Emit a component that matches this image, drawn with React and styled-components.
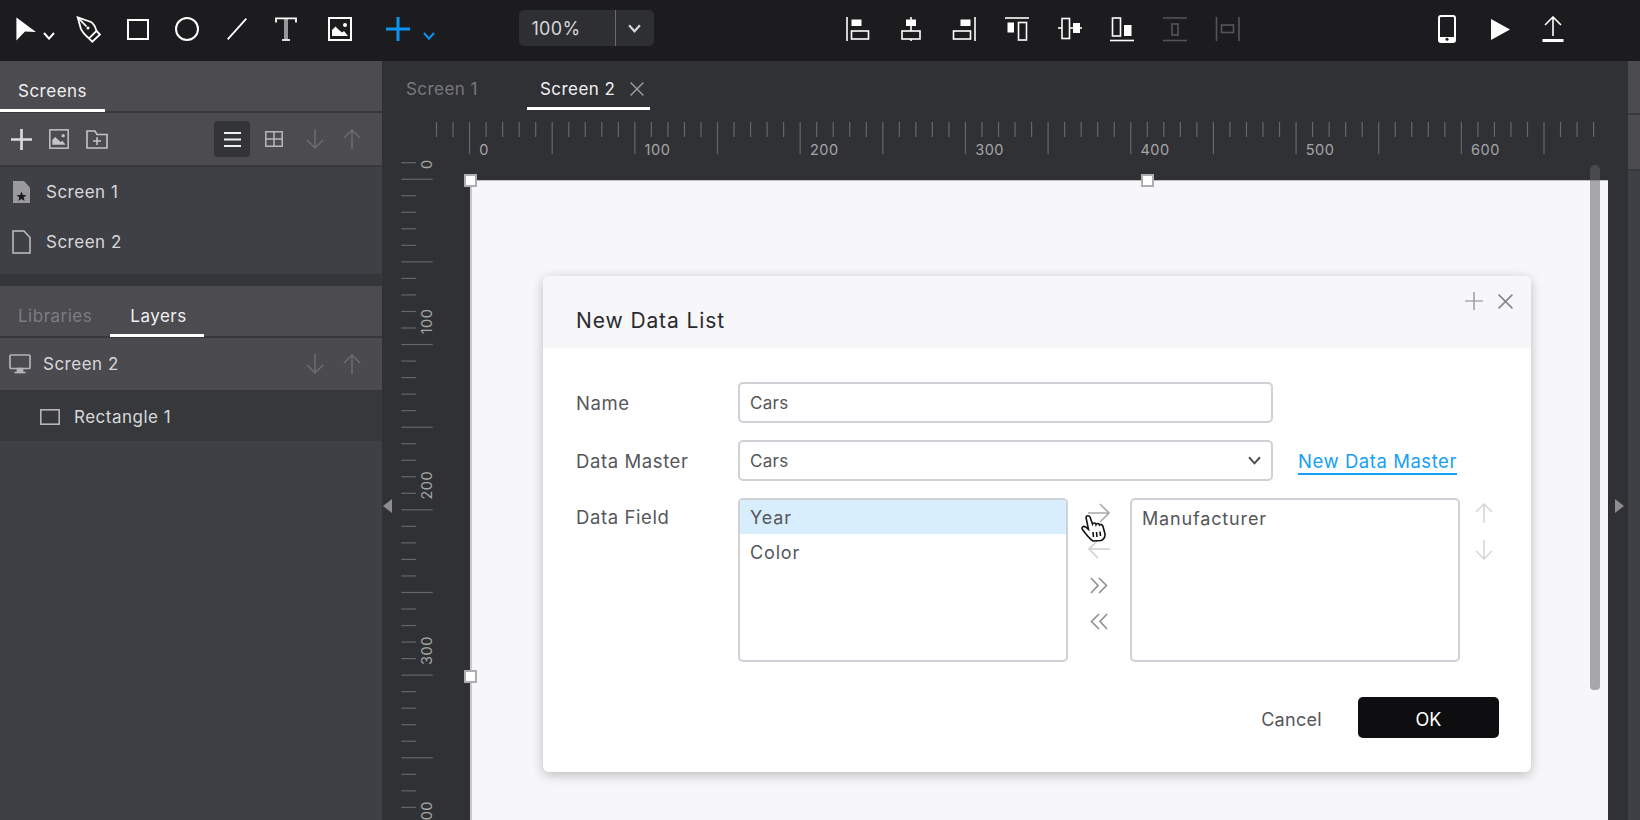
import React from 'react'
import styled, { createGlobalStyle } from 'styled-components'

const GlobalStyle = createGlobalStyle`
  html, body, #root {
    margin: 0;
    width: 1640px;
    height: 820px;
    overflow: hidden;
  }
  body {
    font-family: Inter, "Open Sans", "Liberation Sans", sans-serif;
    background: #303135;
  }
`

const Page = styled.div`
  display: flex;
  flex-direction: column;
  width: 1640px;
  height: 820px;
`

/* top toolbar */
const TopBar = styled.header`
  display: flex;
  align-items: center;
  flex: none;
  height: 61px;
  padding: 0 0 3px 16px;
  box-sizing: border-box;
  background: #1c1c1f;
`
const DrawTools = styled.div`
  display: flex;
  align-items: center;
  width: 502.5px;
  height: 100%;
`
const ToolSlot = styled.div`
  display: flex;
  align-items: center;
  justify-content: ${({ $start }) => ($start ? 'flex-start' : 'center')};
  flex: none;
  width: ${({ $w }) => $w || 49.5}px;
  margin-left: ${({ $ml }) => $ml || 0}px;
  height: 100%;
  padding-top: ${({ $pt }) => $pt || 0}px;
  box-sizing: border-box;
  gap: ${({ $gap }) => $gap || 0}px;
`
const CursorCaret = styled.span`
  display: flex;
  margin-top: 13px;
`
const ZoomBox = styled.div`
  display: flex;
  align-items: center;
  flex: none;
  width: 135px;
  height: 36px;
  margin-top: -2px;
  border-radius: 5px;
  background: #2e2f33;
  color: #d6d6d8;
  font-size: 18px;
`
const ZoomValue = styled.div`
  flex: none;
  width: 96.5px;
  padding-left: 13px;
  box-sizing: border-box;
  letter-spacing: 0.3px;
`
const ZoomCaret = styled.div`
  display: flex;
  align-items: center;
  justify-content: center;
  flex: 1;
  height: 100%;
  border-left: 1px solid #6b6b6f;
`
const AlignTools = styled.div`
  display: flex;
  align-items: center;
  height: 100%;
  margin-left: 178.5px;
`
const DeviceTools = styled.div`
  display: flex;
  align-items: center;
  height: 100%;
  margin-left: 166.5px;
`

/* left panels */
const Body = styled.div`
  display: flex;
  flex: 1;
  min-height: 0;
`
const Sidebar = styled.aside`
  display: flex;
  flex-direction: column;
  flex: none;
  width: 382px;
  background: #3f4045;
  color: #d8d8da;
  font-size: 17px;
  letter-spacing: 0.5px;
`
const PanelTabs = styled.div`
  display: flex;
  align-items: flex-start;
  flex: none;
  height: 52px;
  box-sizing: border-box;
  border-bottom: 2px solid #37383c;
  background: #4b4b50;
`
const PanelTab = styled.div`
  display: flex;
  align-items: center;
  justify-content: ${({ $center }) => ($center ? 'center' : 'flex-start')};
  flex: none;
  width: ${({ $w }) => $w}px;
  height: 51px;
  padding-left: ${({ $pl }) => $pl || 0}px;
  padding-top: 11px;
  box-sizing: border-box;
  border-bottom: 3px solid ${({ $active }) => ($active ? '#fff' : 'transparent')};
  color: ${({ $active }) => ($active ? '#f0f0f2' : '#7d7d82')};
`
const PanelToolbar = styled.div`
  display: flex;
  align-items: center;
  flex: none;
  height: 54px;
  padding: 0 21px 0 11px;
  box-sizing: border-box;
  border-bottom: 2px solid #37383c;
  background: #4b4b50;
`
const ToolIcon = styled.div`
  display: flex;
  flex: none;
  margin-left: ${({ $ml }) => $ml || 0}px;
`
const ViewButton = styled.div`
  display: flex;
  align-items: center;
  justify-content: center;
  flex: none;
  width: 36px;
  height: 36px;
  margin-left: ${({ $ml }) => $ml || 0}px;
  border-radius: 4px;
  background: ${({ $active }) => ($active ? '#333438' : 'transparent')};
`
const ArrowPair = styled.div`
  display: flex;
  align-items: center;
  gap: 19px;
  margin-left: auto;
  color: #6c6d72;
`
const ScreenList = styled.div`
  flex: none;
  height: 107px;
  box-sizing: border-box;
  padding-top: 0.5px;
  background: #3f4045;
`
const ScreenRow = styled.div`
  display: flex;
  align-items: center;
  height: 49.5px;
  padding-left: 12px;
  gap: 15px;
`
const PanelGap = styled.div`
  flex: none;
  height: 12px;
  background: #35363a;
`
const LayerHead = styled.div`
  display: flex;
  align-items: center;
  flex: none;
  height: 53px;
  padding: 0 21px 0 9px;
  box-sizing: border-box;
  gap: 12px;
  border-bottom: 1px solid #37383c;
  background: #4a4a4f;
`
const LayerRow = styled.div`
  display: flex;
  align-items: center;
  flex: none;
  height: 50px;
  padding: 2px 0 0 40px;
  box-sizing: border-box;
  gap: 14px;
  background: #37383c;
`

/* workspace */
const Workspace = styled.main`
  position: relative;
  display: flex;
  flex-direction: column;
  flex: 1;
  min-width: 0;
  background: #303135;
`
const DocTabs = styled.div`
  display: flex;
  align-items: flex-start;
  flex: none;
  height: 50px;
  padding-left: 24px;
  font-size: 17px;
  letter-spacing: 0.45px;
`
const DocTab = styled.div`
  display: flex;
  align-items: center;
  gap: 15px;
  height: 49px;
  box-sizing: border-box;
  padding: 10px ${({ $active }) => ($active ? 5 : 0)}px 0 ${({ $active }) => ($active ? 13 : 0)}px;
  margin-left: ${({ $ml }) => $ml || 0}px;
  width: ${({ $w }) => $w}px;
  border-bottom: 3px solid ${({ $active }) => ($active ? '#fff' : 'transparent')};
  color: ${({ $active }) => ($active ? '#f0f0f2' : '#77787c')};
`
const Stage = styled.div`
  display: flex;
  flex: 1;
  min-height: 0;
`
const RulerColumn = styled.div`
  flex: none;
  width: 52px;
`
const StageBody = styled.div`
  position: relative;
  display: flex;
  flex-direction: column;
  flex: 1;
  min-width: 0;
`
const RulerSvg = styled.svg`
  display: block;
  flex: none;
  font-family: Inter, "Open Sans", sans-serif;
  font-size: 14.5px;
  letter-spacing: 0.5px;
  fill: #a5a5a8;
`
const Artboard = styled.div`
  position: relative;
  flex: 1;
  margin: 0 20px 0 36px;
  padding: 95px 0 0 71px;
  border-top: 1px solid #bdbdc2;
  border-left: 2px solid #c8c8cd;
  background: #f7f6f9;
`
const Handle = styled.span`
  position: absolute;
  left: ${({ $x }) => $x}px;
  top: ${({ $y }) => $y}px;
  width: 13px;
  height: 13px;
  box-sizing: border-box;
  border: 2px solid #aeaeb2;
  background: #fff;
`
const Scrollbar = styled.div`
  position: absolute;
  left: 1156px;
  top: 54px;
  width: 10px;
  height: 525px;
  border-radius: 5px 5px 4px 4px;
  background: rgba(97, 97, 100, 0.53);
`
const CollapseArrow = styled.svg`
  position: absolute;
  top: 438px;
  left: ${({ $x }) => $x}px;
  fill: #8d8d91;
`
const CollapsedPanel = styled.div`
  display: flex;
  flex-direction: column;
  flex: none;
  width: 12px;
  background: #3f4045;
`
const StripCell = styled.div`
  flex: none;
  height: ${({ $h }) => $h}px;
  border-bottom: 2px solid #37383c;
  background: #4b4b50;
`

/* dialog */
const Dialog = styled.div`
  width: 988px;
  height: 496px;
  display: flex;
  flex-direction: column;
  border-radius: 6px;
  background: #fff;
  box-shadow: 0 3px 12px rgba(0, 0, 0, 0.24);
  color: #55565b;
  font-size: 18.5px;
  letter-spacing: 0.6px;
`
const DialogHead = styled.div`
  position: relative;
  display: flex;
  align-items: center;
  flex: none;
  height: 72px;
  padding: 16px 0 0 33px;
  box-sizing: border-box;
  border-radius: 6px 6px 0 0;
  background: #f7f6f9;
`
const DialogTitle = styled.h2`
  margin: 0;
  color: #2a2a2e;
  font-size: 21px;
  font-weight: 400;
  letter-spacing: 0.9px;
`
const HeadActions = styled.div`
  position: absolute;
  top: 16px;
  right: 18px;
  display: flex;
  align-items: center;
  gap: 15px;
  color: #86878c;
`
const DialogBody = styled.div`
  display: flex;
  flex-direction: column;
  flex: 1;
  padding: 34px 32px 34px 33px;
`
const FormRow = styled.div`
  display: flex;
  align-items: center;
  height: 41px;
  margin-bottom: 17px;
`
const FieldLabel = styled.label`
  flex: none;
  width: 162px;
  padding-top: ${({ $pt }) => $pt || 1}px;
  box-sizing: border-box;
`
const Input = styled.div`
  display: flex;
  align-items: center;
  justify-content: space-between;
  flex: none;
  width: 535px;
  height: 41px;
  padding: 0 10px;
  box-sizing: border-box;
  border: 2px solid #d0d0d7;
  border-radius: 5px;
  background: #fff;
  font-size: 17px;
  letter-spacing: 0.3px;
`
const DataLink = styled.a`
  margin: 4px 0 0 25px;
  padding-bottom: 1px;
  border-bottom: 2px solid #14a0f5;
  color: #14a0f5;
  font-size: 18.5px;
  letter-spacing: 0.55px;
`
const FieldRow = styled.div`
  display: flex;
  align-items: flex-start;
  height: 164px;
`
const ListBox = styled.div`
  flex: none;
  width: 330px;
  height: 164px;
  box-sizing: border-box;
  border: 2px solid #d0d0d7;
  border-radius: 5px;
  overflow: hidden;
  background: #fff;
  font-size: 18px;
  letter-spacing: 0.85px;
`
const ListItem = styled.div`
  display: flex;
  align-items: center;
  height: ${({ $selected }) => ($selected ? 34 : 36)}px;
  padding-left: 10px;
  background: ${({ $selected }) => ($selected ? '#d9eefc' : 'transparent')};
`
const MoveColumn = styled.div`
  position: relative;
  display: flex;
  flex-direction: column;
  align-items: center;
  flex: none;
  width: 62px;
  padding-top: 5px;
  box-sizing: border-box;
  gap: 16px;
`
const MoveIcon = styled.div`
  display: flex;
  height: 20px;
  align-items: center;
  color: ${({ $color }) => $color};
`
const HandCursor = styled.svg`
  position: absolute;
  left: 13px;
  top: 16px;
`
const OrderColumn = styled.div`
  display: flex;
  flex-direction: column;
  align-items: center;
  flex: none;
  width: 47px;
  padding-top: 5px;
  gap: 17px;
  color: #d5d5da;
`
const DialogFooter = styled.div`
  display: flex;
  align-items: center;
  justify-content: flex-end;
  margin-top: 35px;
  gap: 36px;
`
const TextButton = styled.button`
  padding: 3px 0 0;
  border: 0;
  background: none;
  color: #55565b;
  font: inherit;
  font-size: 18px;
  letter-spacing: 0.3px;
`
const PrimaryButton = styled.button`
  width: 141px;
  height: 41px;
  padding: 3px 0 0;
  border: 0;
  border-radius: 5px;
  background: #0e0e10;
  color: #fff;
  font: inherit;
  font-size: 18px;
`

/* drawn icons */
const Turned = styled.svg`
  flex: none;
  transform: rotate(${({ $turn }) => $turn || 0}deg) scaleX(${({ $flip }) => ($flip ? -1 : 1)});
`

const Chevron = ({ w = 12, h = 8, color = '#fff', sw = 2 }) => (
  <svg width={w} height={h} viewBox="0 0 12 8" fill="none" stroke={color} strokeWidth={sw}>
    <path d="M1 1 L6 6.6 L11 1" />
  </svg>
)

const Arrow = ({ rotate = 0 }) => (
  <Turned $turn={rotate} width="18" height="20" viewBox="0 0 18 20" fill="none" stroke="currentColor" strokeWidth="1.5">
    <path d="M9 1 V20 M1 9 L9 1 L17 9" />
  </Turned>
)

const SideArrow = ({ rotate = 0 }) => (
  <Turned $turn={rotate} width="22" height="20" viewBox="0 0 22 20" fill="none" stroke="currentColor" strokeWidth="1.6">
    <path d="M0 10 H21 M12 1 L21 10 L12 19" />
  </Turned>
)

const DoubleChevron = ({ flip }) => (
  <Turned $flip={flip} width="18" height="17" viewBox="0 0 18 17" fill="none" stroke="currentColor" strokeWidth="1.6">
    <path d="M1 1 L8 8.5 L1 16 M9 1 L16.5 8.5 L9 16" />
  </Turned>
)

const CursorIcon = () => (
  <svg width="21" height="24" viewBox="0 0 21 24" fill="#fff"><path d="M0.4 0.4 L20 15 L9 14.6 L0.4 23.4 Z" /></svg>
)
const PenIcon = () => (
  <svg width="25" height="27" viewBox="0 0 25 27" fill="none" stroke="#fff" strokeWidth="1.8">
    <path d="M1.7 1.3 L15 6 Q18.5 8 20.5 15 L13 22.3 Q7 17.5 4.7 12.3 Z" />
    <path d="M20.5 15 L24 18.5 L16.3 25.7 L13 22.3" />
    <path d="M1.7 1.3 L10.5 10.5" />
    <circle cx="12" cy="12" r="1.5" fill="#fff" stroke="none" />
  </svg>
)
const RectIcon = () => (
  <svg width="22" height="21" viewBox="0 0 22 21" fill="none" stroke="#fff" strokeWidth="2"><rect x="1" y="1" width="20" height="19" /></svg>
)
const CircleIcon = () => (
  <svg width="24" height="24" viewBox="0 0 24 24" fill="none" stroke="#fff" strokeWidth="2"><circle cx="12" cy="12" r="11" /></svg>
)
const LineIcon = () => (
  <svg width="20" height="22" viewBox="0 0 20 22" fill="none" stroke="#fff" strokeWidth="1.8"><path d="M0.7 21.4 L19.3 0.6" /></svg>
)
const TextIcon = () => (
  <svg width="22" height="24" viewBox="0 0 22 24" fill="none" stroke="#fff">
    <path d="M1 5.5 V1.4 H21 V5.5" strokeWidth="1.8" />
    <path d="M10 2 V22.6 M12 2 V22.6" strokeWidth="1.1" />
    <path d="M7 23 H15" strokeWidth="1.7" />
  </svg>
)
const ImageIcon = ({ size = 24, color = '#fff', sw = 2 }) => (
  <svg width={size} height={size} viewBox="0 0 24 24" fill="none" stroke={color} strokeWidth={sw}>
    <rect x="1" y="1" width="22" height="22" />
    <path d="M4 19 V13 L7.5 9.5 L11 13 L14 15.5 L16 14 L20 19 Z" fill={color} stroke="none" />
    <circle cx="17" cy="8" r="2" fill={color} stroke="none" />
  </svg>
)
const BigPlus = ({ size = 24, color = '#fff', sw = 3 }) => (
  <svg width={size} height={size} viewBox="0 0 24 24" fill="none" stroke={color} strokeWidth={sw}><path d="M12 0 V24 M0 12 H24" /></svg>
)
const FolderPlus = () => (
  <svg width="22" height="19" viewBox="0 0 22 19" fill="none" stroke="#c4c4c8" strokeWidth="1.6">
    <path d="M1 18 V1 H9 L11 4.5 H21 V18 Z" />
    <path d="M7 11 H15 M11 7.2 V15" />
  </svg>
)
const ListIcon = () => (
  <svg width="17" height="15" viewBox="0 0 17 15" fill="none" stroke="#f0f0f2" strokeWidth="1.8"><path d="M0 1 H17 M0 7.5 H17 M0 14 H17" /></svg>
)
const GridIcon = () => (
  <svg width="18" height="16" viewBox="0 0 18 16" fill="none" stroke="#b8b8bc" strokeWidth="1.5"><path d="M0.8 0.8 H17.2 V15.2 H0.8 Z M9 0.8 V15.2 M0.8 8 H17.2" /></svg>
)
const PageIcon = ({ starred }) => (
  <svg width="19" height="24" viewBox="0 0 19 24" fill={starred ? '#9a9a9e' : 'none'} stroke={starred ? 'none' : '#c0c0c4'} strokeWidth="1.5">
    <path d="M1 1 H12 L18 7.5 V23 H1 Z" />
    {starred && <path d="M9.5 11.5 L10.9 15 L14.5 15.2 L11.7 17.5 L12.6 21 L9.5 19 L6.4 21 L7.3 17.5 L4.5 15.2 L8.1 15 Z" fill="#1c1c1f" />}
  </svg>
)
const MonitorIcon = () => (
  <svg width="22" height="20" viewBox="0 0 22 20" fill="none" stroke="#b4b4b8" strokeWidth="1.7">
    <rect x="1" y="1" width="20" height="13.5" rx="1" />
    <path d="M8.5 14.5 H13.5 V17.5 H8.5 Z" fill="#b4b4b8" />
    <path d="M5.5 18.5 H16.5" />
  </svg>
)
const RectOutline = () => (
  <svg width="20" height="16" viewBox="0 0 20 16" fill="none" stroke="#b4b4b8" strokeWidth="1.6"><rect x="0.8" y="0.8" width="18.4" height="14.4" /></svg>
)

const AlignSvg = styled.svg`
  color: ${({ $dim }) => ($dim ? '#55565a' : '#fff')};
  stroke: currentColor;
  fill: none;
  stroke-width: 1.6;
`
const AlignIcon = ({ dim, children }) => (
  <AlignSvg $dim={dim} width="26" height="26" viewBox="0 0 26 26">{children}</AlignSvg>
)
const ALIGN = [
  <><path d="M2 1 V25" /><rect x="6.5" y="3.5" width="10" height="6.5" fill="currentColor" stroke="none" /><rect x="6.5" y="15" width="17" height="8" /></>,
  <><path d="M13 1 V25" /><rect x="8" y="3.5" width="10" height="6.5" fill="currentColor" stroke="none" /><rect x="4" y="15" width="18" height="8" fill="#1c1c1f" /></>,
  <><path d="M24 1 V25" /><rect x="9.5" y="3.5" width="10" height="6.5" fill="currentColor" stroke="none" /><rect x="2.5" y="15" width="17" height="8" /></>,
  <><path d="M1 2 H25" /><rect x="3.5" y="6.5" width="6.5" height="10" fill="currentColor" stroke="none" /><rect x="14.5" y="6.5" width="8" height="17.5" /></>,
  <><path d="M1 12 H25" /><rect x="5" y="2.5" width="7.5" height="20" fill="#1c1c1f" /><rect x="16" y="7" width="7" height="10" fill="currentColor" stroke="none" /></>,
  <><rect x="3.5" y="2" width="8" height="18" /><rect x="15" y="9" width="7.5" height="11" fill="currentColor" stroke="none" /><path d="M1 24.5 H25" /></>,
]
const DistV = () => (
  <AlignIcon dim><path d="M1 2 H25 M1 24.5 H25" /><rect x="10" y="8" width="6" height="11" /></AlignIcon>
)
const DistH = () => (
  <AlignIcon dim><path d="M1.5 1 V25 M24 1 V25" /><rect x="6.5" y="9" width="12" height="7.5" /></AlignIcon>
)
const PhoneIcon = () => (
  <svg width="18" height="28" viewBox="0 0 18 28" fill="none" stroke="#fff" strokeWidth="2">
    <rect x="1" y="1" width="16" height="26" rx="2" />
    <path d="M1 22 H17 V25 Q17 27 15 27 H3 Q1 27 1 25 Z" fill="#fff" stroke="none" />
    <circle cx="9" cy="24.3" r="1.5" fill="#1c1c1f" stroke="none" />
  </svg>
)
const PlayIcon = () => (
  <svg width="19" height="21" viewBox="0 0 19 21" fill="#fff"><path d="M0 0 L19 10.5 L0 21 Z" /></svg>
)
const UploadIcon = () => (
  <svg width="22" height="26" viewBox="0 0 22 26" fill="none" stroke="#fff">
    <path d="M11 1 V20 M3 9 L11 1 L19 9" strokeWidth="1.6" />
    <path d="M0.5 24.5 H21.5" strokeWidth="3" />
  </svg>
)
const CloseGlyph = ({ size = 15, color = 'currentColor', sw = 1.6 }) => (
  <svg width={size} height={size} viewBox="0 0 15 15" fill="none" stroke={color} strokeWidth={sw}><path d="M0.6 0.6 L14.4 14.4 M14.4 0.6 L0.6 14.4" /></svg>
)

const STEP = 16.53
const hTicks = Array.from({ length: 71 }, (_, i) => i)
const vTicks = Array.from({ length: 41 }, (_, i) => i)

const HorizontalRuler = () => (
  <RulerSvg width="1194" height="69" viewBox="0 0 1194 69">
    {hTicks.map(i => {
      const x = 2.5 + i * STEP
      const long = (i + 3) % 5 === 0
      return <line key={i} x1={x} x2={x} y1="11" y2={long ? 43 : 26} stroke="#66676b" strokeWidth="1.2" />
    })}
    {[0, 100, 200, 300, 400, 500, 600].map((n, i) => (
      <text key={n} x={45.3 + i * STEP * 10} y="43.7">{n}</text>
    ))}
  </RulerSvg>
)

const VerticalRuler = () => (
  <RulerSvg width="52" height="709" viewBox="0 0 52 709">
    {vTicks.map(i => {
      const y = 51.7 + i * STEP
      const long = i % 5 === 1
      return <line key={i} x1="19.3" x2={long ? 50.7 : 34} y1={y} y2={y} stroke="#66676b" strokeWidth="1.2" />
    })}
    {[0, 100, 200, 300, 400].map((n, i) => {
      const y = 58 + i * STEP * 10
      return <text key={n} x="50.3" y={y} transform={`rotate(-90 50.3 ${y})`}>{n}</text>
    })}
  </RulerSvg>
)

const App = () => {
  return (
    <Page>
      <GlobalStyle />
      <TopBar>
        <DrawTools>
          <ToolSlot $w={47.5} $gap={6} $start>
            <CursorIcon />
            <CursorCaret><Chevron /></CursorCaret>
          </ToolSlot>
          <ToolSlot><PenIcon /></ToolSlot>
          <ToolSlot><RectIcon /></ToolSlot>
          <ToolSlot><CircleIcon /></ToolSlot>
          <ToolSlot><LineIcon /></ToolSlot>
          <ToolSlot><TextIcon /></ToolSlot>
          <ToolSlot $ml={4}><ImageIcon /></ToolSlot>
          <ToolSlot $ml={9}><BigPlus color="#0a95f5" /></ToolSlot>
          <ToolSlot $w={12} $pt={13}><Chevron color="#0a95f5" /></ToolSlot>
        </DrawTools>
        <ZoomBox>
          <ZoomValue>100%</ZoomValue>
          <ZoomCaret><Chevron w={13} h={9} color="#d6d6d8" /></ZoomCaret>
        </ZoomBox>
        <AlignTools>
          {ALIGN.map((shape, i) => (
            <ToolSlot key={i} $w={52.8}><AlignIcon>{shape}</AlignIcon></ToolSlot>
          ))}
          <ToolSlot $w={52.8}><DistV /></ToolSlot>
          <ToolSlot $w={52.8}><DistH /></ToolSlot>
        </AlignTools>
        <DeviceTools>
          <ToolSlot $w={53}><PhoneIcon /></ToolSlot>
          <ToolSlot $w={53}><PlayIcon /></ToolSlot>
          <ToolSlot $w={53}><UploadIcon /></ToolSlot>
        </DeviceTools>
      </TopBar>

      <Body>
        <Sidebar>
          <PanelTabs>
            <PanelTab $w={105} $pl={18} $active>Screens</PanelTab>
          </PanelTabs>
          <PanelToolbar>
            <ToolIcon><BigPlus size={21} color="#dcdcde" /></ToolIcon>
            <ToolIcon $ml={17}><ImageIcon size={20} color="#c4c4c8" sw={1.8} /></ToolIcon>
            <ToolIcon $ml={17}><FolderPlus /></ToolIcon>
            <ViewButton $ml={106} $active><ListIcon /></ViewButton>
            <ViewButton $ml={6}><GridIcon /></ViewButton>
            <ArrowPair>
              <Arrow rotate={180} />
              <Arrow />
            </ArrowPair>
          </PanelToolbar>
          <ScreenList>
            <ScreenRow><PageIcon starred /><span>Screen 1</span></ScreenRow>
            <ScreenRow><PageIcon /><span>Screen 2</span></ScreenRow>
          </ScreenList>
          <PanelGap />
          <PanelTabs>
            <PanelTab $w={110} $pl={18}>Libraries</PanelTab>
            <PanelTab $w={94} $pl={3} $center $active>Layers</PanelTab>
          </PanelTabs>
          <LayerHead>
            <MonitorIcon />
            <span>Screen 2</span>
            <ArrowPair>
              <Arrow rotate={180} />
              <Arrow />
            </ArrowPair>
          </LayerHead>
          <LayerRow>
            <RectOutline />
            <span>Rectangle 1</span>
          </LayerRow>
        </Sidebar>

        <Workspace>
          <CollapseArrow $x={1} width="9" height="14" viewBox="0 0 9 14"><path d="M9 0 V14 L0 7 Z" /></CollapseArrow>
          <CollapseArrow $x={1233} width="9" height="14" viewBox="0 0 9 14"><path d="M0 0 V14 L9 7 Z" /></CollapseArrow>
          <DocTabs>
            <DocTab $w={108}>Screen 1</DocTab>
            <DocTab $w={123} $ml={13} $active>
              <span>Screen 2</span>
              <CloseGlyph size={14} color="#9a9a9e" />
            </DocTab>
          </DocTabs>
          <Stage>
            <RulerColumn><VerticalRuler /></RulerColumn>
            <StageBody>
              <HorizontalRuler />
              <Artboard>
                <Handle $x={-8} $y={-7} />
                <Handle $x={669} $y={-7} />
                <Handle $x={-8} $y={489} />
                <Dialog>
                  <DialogHead>
                    <DialogTitle>New Data List</DialogTitle>
                    <HeadActions>
                      <BigPlus size={18} color="#86878c" sw={1.6} />
                      <CloseGlyph />
                    </HeadActions>
                  </DialogHead>
                  <DialogBody>
                    <FormRow>
                      <FieldLabel>Name</FieldLabel>
                      <Input>Cars</Input>
                    </FormRow>
                    <FormRow>
                      <FieldLabel>Data Master</FieldLabel>
                      <Input>
                        Cars
                        <Chevron w={13} h={9} color="#4a4b50" sw={1.8} />
                      </Input>
                      <DataLink>New Data Master</DataLink>
                    </FormRow>
                    <FieldRow>
                      <FieldLabel $pt={8}>Data Field</FieldLabel>
                      <ListBox>
                        <ListItem $selected>Year</ListItem>
                        <ListItem>Color</ListItem>
                      </ListBox>
                      <MoveColumn>
                        <MoveIcon $color="#a9a9ae"><SideArrow /></MoveIcon>
                        <MoveIcon $color="#d0d0d5"><SideArrow rotate={180} /></MoveIcon>
                        <MoveIcon $color="#8f8f94"><DoubleChevron /></MoveIcon>
                        <MoveIcon $color="#8f8f94"><DoubleChevron flip /></MoveIcon>
                        <HandCursor width="26" height="28" viewBox="0 0 26 28" fill="#fff" stroke="#111" strokeWidth="1.6">
                          <path d="M5 3.5 C5 1.5 8 1 9 3 L11.5 10 C12 8.5 14.5 8.5 15 10.5 C15.5 9 18 9 18.5 11 C19.5 10 21.5 10.5 22 12.5 L24 20 C24.5 23 22 26 20 26.5 L12 27 C9 25 4 19 1.5 15.5 C0 13.5 2.5 11.5 4.5 13 L7.5 15.5 Z" />
                          <path d="M12 18 L12.5 23 M15.5 18 L16 23 M19 17.5 L19.5 22" fill="none" />
                        </HandCursor>
                      </MoveColumn>
                      <ListBox>
                        <ListItem>Manufacturer</ListItem>
                      </ListBox>
                      <OrderColumn>
                        <Arrow />
                        <Arrow rotate={180} />
                      </OrderColumn>
                    </FieldRow>
                    <DialogFooter>
                      <TextButton>Cancel</TextButton>
                      <PrimaryButton>OK</PrimaryButton>
                    </DialogFooter>
                  </DialogBody>
                </Dialog>
              </Artboard>
              <Scrollbar />
            </StageBody>
          </Stage>
        </Workspace>

        <CollapsedPanel>
          <StripCell $h={52} />
          <StripCell $h={54} />
        </CollapsedPanel>
      </Body>
    </Page>
  )
}

export default App
